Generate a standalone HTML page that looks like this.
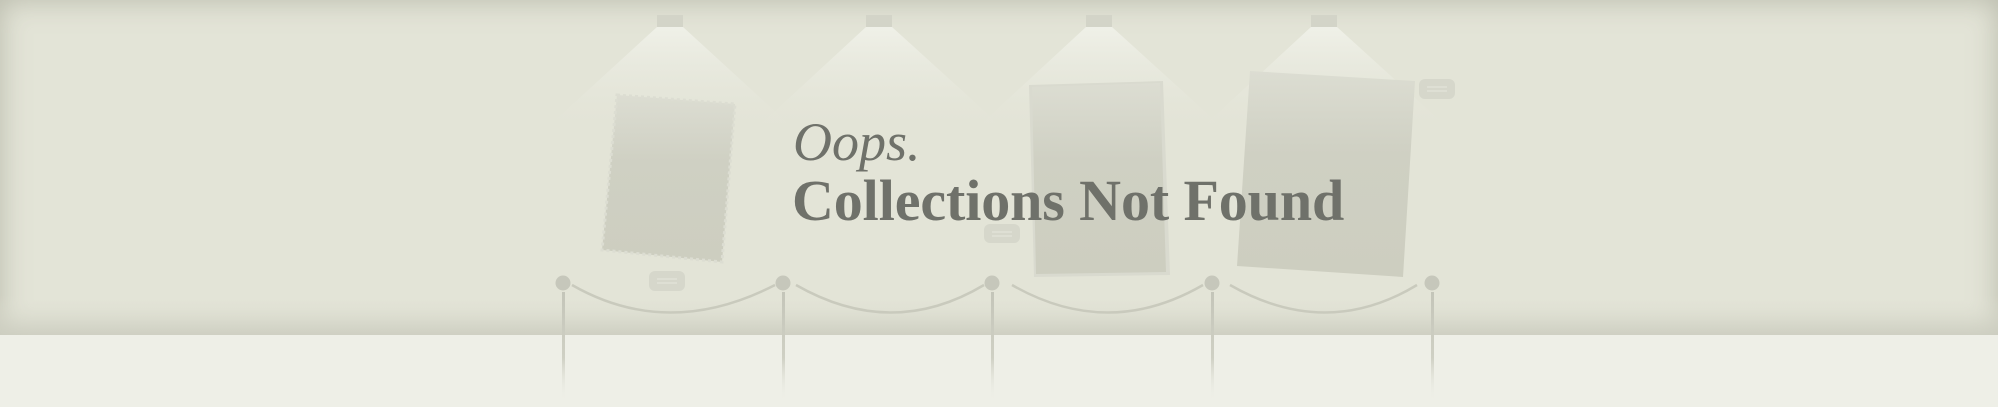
<!DOCTYPE html>
<html><head><style>
html,body{margin:0;padding:0}
body{width:1998px;height:407px;overflow:hidden;position:relative;background:#eeefe7;font-family:"Liberation Serif",serif}
#wall{position:absolute;left:0;top:0;width:1998px;height:335px;background:#e3e4d7;box-shadow:inset 0 0 28px rgba(150,152,135,.55)}
#floor{position:absolute;left:0;top:335px;width:1998px;height:72px;background:#eeefe7}
.t{position:absolute;color:#6f716a;white-space:nowrap}
</style></head><body>
<div id="wall"></div><div id="floor"></div>
<svg width="1998" height="407" style="position:absolute;left:0;top:0">
<defs>
<linearGradient id="cone" x1="0" y1="0" x2="0" y2="1">
<stop offset="0" stop-color="#f1f2ea" stop-opacity=".9"/><stop offset="1" stop-color="#e6e7dc" stop-opacity="0"/></linearGradient>
<linearGradient id="fr" x1="0" y1="0" x2="0" y2="1">
<stop offset="0" stop-color="#dcddd2"/><stop offset=".4" stop-color="#cfd0c3"/><stop offset="1" stop-color="#cdcec0"/></linearGradient>
<linearGradient id="post" x1="0" y1="0" x2="0" y2="1">
<stop offset="0" stop-color="#c4c5b9"/><stop offset=".6" stop-color="#cfd0c4"/><stop offset="1" stop-color="#eeefe7" stop-opacity="0"/></linearGradient>
<linearGradient id="floorsh" x1="0" y1="0" x2="0" y2="1">
<stop offset="0" stop-color="#e3e4d7" stop-opacity="0"/><stop offset="1" stop-color="#cfd0c3"/></linearGradient>
</defs>
<rect x="0" y="295" width="1998" height="40" fill="url(#floorsh)" opacity=".8"/>
<g fill="url(#cone)">
<polygon points="657,27 683,27 790,125 550,125"/>
<polygon points="866,27 892,27 1000,125 760,125"/>
<polygon points="1086,27 1112,27 1220,125 980,125"/>
<polygon points="1311,27 1337,27 1445,125 1205,125"/>
</g>
<g fill="#d3d4c8">
<rect x="657" y="15" width="26" height="12"/><rect x="866" y="15" width="26" height="12"/>
<rect x="1086" y="15" width="26" height="12"/><rect x="1311" y="15" width="26" height="12"/>
</g>
<polygon points="617,95 735,104 722,262 602,250" fill="url(#fr)" stroke="#dcddd2" stroke-width="3" stroke-dasharray="3 3"/>
<polygon points="1029,85 1163,81 1170,275 1034,277" fill="#d9dacf"/>
<polygon points="1032,87 1160,83 1166,272 1036,274" fill="url(#fr)"/>
<polygon points="1250,71 1415,81 1403,277 1237,266" fill="url(#fr)"/>
<g fill="#d6d7cb">
<rect x="649" y="271" width="36" height="20" rx="6"/>
<rect x="984" y="224" width="36" height="19" rx="6"/>
<rect x="1419" y="79" width="36" height="20" rx="6"/>
</g>
<g stroke="#e6e7dc" stroke-width="1">
<path d="M657 279h20M657 283h20M992 232h20M992 236h20M1427 87h20M1427 91h20"/>
</g>
<g fill="none" stroke="#c9cabd" stroke-width="2.5">
<path d="M572 285 Q668 340 775 285"/>
<path d="M796 285 Q892 340 984 285"/>
<path d="M1012 285 Q1108 340 1203 285"/>
<path d="M1230 285 Q1326 340 1417 285"/>
</g>
<g fill="url(#post)">
<rect x="562" y="292" width="3" height="110"/><rect x="782" y="292" width="3" height="110"/>
<rect x="991" y="292" width="3" height="110"/><rect x="1211" y="292" width="3" height="110"/>
<rect x="1431" y="292" width="3" height="110"/>
</g>
<g fill="#c6c7bb">
<circle cx="563" cy="283" r="7.5"/><circle cx="783" cy="283" r="7.5"/><circle cx="992" cy="283" r="7.5"/>
<circle cx="1212" cy="283" r="7.5"/><circle cx="1432" cy="283" r="7.5"/>
</g>
</svg>
<div class="t" style="left:793px;top:110px;font-size:54px;font-style:italic;line-height:64px">Oops.</div>
<div class="t" style="left:792px;top:166px;font-size:58px;font-weight:bold;line-height:70px;letter-spacing:-0.1px">Collections Not Found</div>
</body></html>
